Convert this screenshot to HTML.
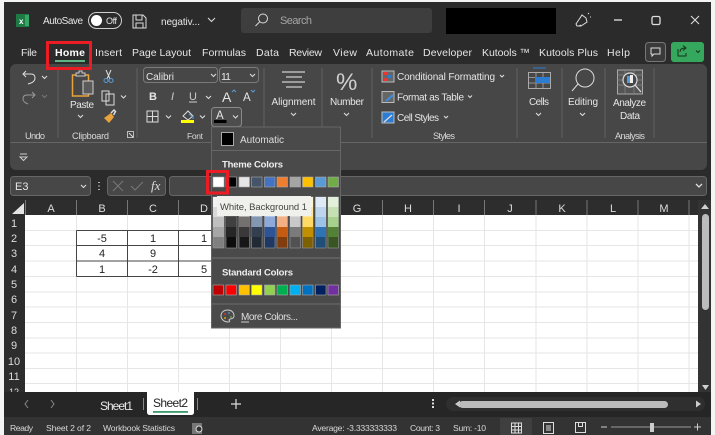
<!DOCTYPE html>
<html><head><meta charset="utf-8"><style>
html,body{margin:0;padding:0;background:#f4f4f4;width:715px;height:435px;overflow:hidden}
svg{display:block;filter:blur(.35px)}
text{font-family:"Liberation Sans",sans-serif;font-size:10.5px;fill:#e6e6e6;white-space:pre}
.s{font-size:9.2px;fill:#d8d8d8}
.t{font-size:10px}
.st{font-size:8.6px;fill:#d8d8d8}
.h{font-size:11px;fill:#dcdcdc;text-anchor:middle}
.c{font-size:11px;fill:#222;text-anchor:middle}
.b{font-weight:bold;font-size:9.5px;fill:#eee}
.l{fill:none;stroke:#dcdcdc;stroke-width:1}
.ch{fill:none;stroke:#dcdcdc;stroke-width:1.1}
.sep{stroke:#666;stroke-width:1}
</style></head><body>
<svg width="715" height="435" viewBox="0 0 715 435" xmlns="http://www.w3.org/2000/svg">
<rect x="4" y="2" width="707" height="433" fill="#2b2b2b"/>
<!-- title bar -->
<rect x="16" y="14" width="13" height="13" fill="#1d7a45"/><rect x="25" y="15" width="4" height="11" fill="#37a768"/>
<text x="19" y="24" style="font-size:8px;font-weight:bold;fill:#fff">x</text>
<text x="43" y="24" class="t" textLength="40">AutoSave</text>
<rect x="88.500" y="12.500" width="33" height="16" rx="8" fill="#2b2b2b" stroke="#cfcfcf"/>
<circle cx="96.500" cy="20.500" r="5.500" fill="#fff"/>
<text x="106" y="24" style="font-size:9px" textLength="11">Off</text>
<path class="l" d="M133 15h10l3 3v10h-13zM136 15v5h6v-5M136 28v-5h7v5" stroke-width="1.100"/>
<text x="161" y="25" class="t" textLength="39">negativ...</text>
<path class="ch" d="M208 18l3.500 3.500 3.500-3.500"/>
<rect x="241" y="8" width="191" height="25" rx="3" fill="#3e3e3e"/>
<circle cx="263" cy="18.500" r="4.500" class="l" stroke="#bbb"/><path class="l" d="M259.500 22l-4 4"/>
<text x="280" y="24" style="fill:#a5a5a5;font-size:11px" textLength="32">Search</text>
<rect x="446" y="8" width="110" height="26" fill="#000"/>
<path class="l" d="M576 24l6-9 4 3 1 4-6 4-4 0zM581 25l-2 1M588 14l1-1M590 17h1"/>
<path d="M614 20h8" stroke="#ccc" stroke-width="1.500"/>
<rect x="652" y="16.500" width="8" height="8" rx="1.500" fill="none" stroke="#ddd" stroke-width="1.300"/>
<path d="M691 16l8 8M699 16l-8 8" stroke="#ddd" stroke-width="1.100"/>
<!-- tabs -->
<text x="21" y="56" textLength="16">File</text>
<text x="55" y="56" textLength="30" style="font-weight:bold;font-size:10.5px;fill:#fff">Home</text>
<text x="95" y="56" textLength="27">Insert</text>
<text x="132" y="56" textLength="59">Page Layout</text>
<text x="202" y="56" textLength="44">Formulas</text>
<text x="256" y="56" textLength="23">Data</text>
<text x="289" y="56" textLength="33">Review</text>
<text x="333" y="56" textLength="24">View</text>
<text x="366" y="56" textLength="48">Automate</text>
<text x="423" y="56" textLength="49">Developer</text>
<text x="482" y="56" textLength="48">Kutools ™</text>
<text x="539" y="56" textLength="59">Kutools Plus</text>
<text x="607" y="56" textLength="23">Help</text>
<rect x="55" y="60" width="30" height="2" fill="#5cb684"/>
<rect x="645.500" y="42.500" width="20" height="19" rx="3" fill="#3a3a3a" stroke="#777"/>
<path class="l" d="M651 48h9v6h-6l-2 2v-2h-1z"/>
<rect x="671" y="42" width="33" height="20" rx="3" fill="#36a85d"/>
<path d="M678 49v7h8v-3M680 52c0-3 2-4 5-4M683 45.500l3 2.500-3 2.500" fill="none" stroke="#17301f"/>
<path d="M696 50.500l2 2 2-2" fill="none" stroke="#17301f"/>
<!-- ribbon -->
<rect x="10" y="64" width="697" height="106" rx="6" fill="#474747"/>
<path class="sep" d="M10.500 142.500H707"/>
<path d="M58 68v70M137 68v70M264 68v70M322 68v70M372 68v70M517 68v70M562 68v70M605 68v70M654 68v70" stroke="#606060"/>
<path class="l" d="M26 71l-3 3 3 3M23 74h8c3 0 4 2 4 4 0 3-3 5-7 6"/><path class="ch" d="M42 76l2.500 2.500 2.500-2.500"/>
<path d="M32 92l3 3-3 3M35 95h-8c-3 0-4 2-4 4 0 2 2 4 5 5" fill="none" stroke="#9a9a9a"/><path d="M42 95l2.500 2.500 2.500-2.500" fill="none" stroke="#777"/>
<text x="25" y="139" class="s" textLength="20">Undo</text>
<!-- clipboard -->
<rect x="72.500" y="75" width="16" height="21" fill="none" stroke="#e8a33c" stroke-width="1.500"/>
<path d="M76 75v-2h3v-2h3v2h3v3h-9z" fill="#474747" stroke="#ccc"/>
<rect x="83" y="81" width="10" height="13" fill="#5a5a5a" stroke="#cfcfcf"/>
<text x="70" y="108" class="t" textLength="24">Paste</text>
<path class="ch" d="M78 115l2.500 2.500 2.500-2.500"/>
<path class="l" d="M106 70l4 9M111 70l-4 9"/><circle cx="106" cy="80.500" r="2" fill="none" stroke="#5b9bd5"/><circle cx="111" cy="80.500" r="2" fill="none" stroke="#5b9bd5"/>
<path class="l" d="M102 91h7v10h-7zM106 94h8v11h-8z" fill="#474747"/><path class="ch" d="M121 95.500l2.500 2.500 2.500-2.500"/>
<path d="M104 118l7-5 3 4-5 6z" fill="#e8a33c"/><path d="M111 113l3-3 1.500 1.500-2 3.500" fill="none" stroke="#ddd" stroke-width="1.500"/>
<text x="72" y="139" class="s" textLength="37">Clipboard</text>
<rect x="127.500" y="131.500" width="6" height="6" fill="none" stroke="#bbb"/><path d="M129 133l4 4" stroke="#ddd"/>
<!-- font -->
<rect x="143.500" y="67.500" width="74" height="15" rx="3" fill="#474747" stroke="#7a7a7a"/>
<text x="146" y="80" class="t" textLength="28">Calibri</text><path class="ch" d="M211 74l2.500 2.500 2.500-2.500"/>
<rect x="219.500" y="67.500" width="39" height="15" rx="3" fill="#474747" stroke="#7a7a7a"/>
<text x="221" y="80" textLength="10">11</text><path class="ch" d="M250 74l2.500 2.500 2.500-2.500"/>
<text x="149" y="100" style="font-weight:bold;font-size:11px">B</text>
<text x="171" y="100" style="font-style:italic;font-size:11px;fill:#ccc">I</text>
<text x="189" y="100" style="font-size:11px;fill:#ccc">U</text><path d="M189 102h8" stroke="#ccc"/>
<path class="ch" d="M206 96l2.500 2.500 2.500-2.500"/>
<text x="222" y="102" style="font-size:14px">A</text><path d="M232 92l2 -2 2 2" fill="none" stroke="#5b9bd5"/>
<text x="243" y="101" style="font-size:11.500px">A</text><path d="M251 90l2 2 2-2" fill="none" stroke="#5b9bd5"/>
<path class="l" d="M147 111h11v11h-11zM152.500 111v11M147 116.500h11" stroke-width="1.200"/><path class="ch" d="M166 115.500l2.500 2.500 2.500-2.500"/>
<path d="M183 116l5-5 5 5-5 4z" fill="none" stroke="#ddd"/><path d="M189 114l4 3v2" fill="none" stroke="#5b9bd5"/>
<rect x="181" y="120" width="13" height="3" fill="#ffff00"/><path class="ch" d="M200 115.500l2.500 2.500 2.500-2.500"/>
<rect x="211.500" y="107.500" width="30" height="19" rx="3" fill="#4d4d4d" stroke="#8a8a8a"/>
<text x="216" y="119" style="font-size:11.500px">A</text><rect x="214" y="120" width="12.500" height="3" fill="#000"/>
<path class="ch" d="M233 115.500l2.500 2.500 2.500-2.500"/>
<text x="187" y="139" class="s" textLength="16" style="font-size:8.500px">Font</text>
<!-- alignment -->
<path d="M282 72h23M286 77h16M282 82h23M286 87h16" stroke="#cfcfcf" stroke-width="1.300"/>
<text x="271.500" y="105" class="t" textLength="44">Alignment</text>
<path class="ch" d="M291 113l2.500 2.500 2.500-2.500"/>
<!-- number -->
<text x="336" y="90" style="font-size:24px;fill:#cfcfcf">%</text>
<text x="330" y="105" class="t" textLength="34">Number</text>
<path class="ch" d="M344 113l2.500 2.500 2.500-2.500"/>
<!-- styles -->
<rect x="382" y="71" width="12" height="11" fill="#666" stroke="#bbb"/><rect x="384" y="72" width="4" height="3" fill="#e33"/><rect x="388" y="75" width="3" height="3" fill="#2b7cd3"/><rect x="384" y="78" width="4" height="3" fill="#e33"/>
<text x="397" y="80" class="t" textLength="98">Conditional Formatting</text><path class="ch" d="M500 75l2 2 2-2"/>
<rect x="382" y="91.500" width="12" height="11" fill="#666" stroke="#bbb"/><path d="M386 101l7-6" stroke="#3c8fe0" stroke-width="2"/>
<text x="397" y="100.500" class="t" textLength="67">Format as Table</text><path class="ch" d="M468 95.500l2 2 2-2"/>
<rect x="382" y="112" width="12" height="11" fill="#2b7cd3" stroke="#bbb"/><path d="M384 122l8-7" stroke="#ddd" stroke-width="1.300"/>
<text x="397" y="121" class="t" textLength="42">Cell Styles</text><path class="ch" d="M444 116l2 2 2-2"/>
<text x="433" y="139" class="s" textLength="22">Styles</text>
<!-- cells -->
<rect x="528.500" y="72.500" width="22" height="16" fill="none" stroke="#aaa"/><path d="M528 77.500h23M528 83h23M536 72v16M543 72v16" stroke="#aaa" stroke-width=".8"/>
<rect x="535" y="77" width="15" height="6" fill="#2b7cd3"/><path d="M533 68h13" stroke="#2b7cd3"/>
<text x="529" y="105" class="t" textLength="20">Cells</text><path class="ch" d="M536 113l2.500 2.500 2.500-2.500"/>
<!-- editing -->
<circle cx="585" cy="78" r="9" class="l" stroke="#ccc"/><path class="l" d="M578 84l-6 7"/>
<text x="568" y="105" class="t" textLength="30">Editing</text><path class="ch" d="M580 113l2.500 2.500 2.500-2.500"/>
<!-- analyze -->
<rect x="617.500" y="70" width="25" height="24" fill="#555" stroke="#aaa"/><path d="M617 75h26M617 80h26M617 85h26M625 70v24M634 70v24" stroke="#888" stroke-width=".7"/>
<circle cx="630" cy="80" r="7" fill="#474747" stroke="#ddd" stroke-width="1.200"/><rect x="627" y="76" width="3" height="7" fill="#5b9bd5"/><rect x="630" y="75" width="3" height="8" fill="#eee"/><path d="M635 85l6 7" stroke="#ddd" stroke-width="1.300"/>
<text x="613" y="106" class="t" textLength="33">Analyze</text><text x="620" y="119" class="t" textLength="20">Data</text>
<text x="615" y="139" class="s" textLength="30">Analysis</text>
<path d="M20 154h7M20 157h7l-3.500 3.500z" fill="none" stroke="#ccc"/>
<!-- formula bar -->
<rect x="10.500" y="176.500" width="80" height="19" rx="3" fill="#474747" stroke="#666"/>
<text x="15" y="190" style="font-size:11px">E3</text><path class="ch" d="M81 185l2.500 2.500 2.500-2.500" stroke-width="1.300"/>
<path d="M99 182v1M99 185.500v1M99 189v1" stroke="#ddd" stroke-width="1.500"/>
<rect x="107.500" y="176.500" width="58" height="19" rx="3" fill="#474747" stroke="#666"/>
<path d="M113 181l10 10M123 181l-10 10M131 186l4 4 8-8" fill="none" stroke="#777"/>
<text x="151" y="190" style="font-family:'Liberation Serif',serif;font-style:italic;font-size:13px;fill:#ddd">fx</text>
<rect x="169.500" y="176.500" width="537" height="19" rx="3" fill="#474747" stroke="#666"/>
<path d="M696 184l3 3 3-3" fill="none" stroke="#ddd" stroke-width="1.300"/>
<!-- sheet -->
<rect x="4" y="200" width="707" height="192" fill="#2d2d2d"/>
<rect x="25" y="215" width="673" height="177" fill="#fff"/>
<path d="M24 203v11H12z" fill="#e4e4e4"/>
<path d="M25.500 200v15M76.500 200v15M127.500 200v15M178.500 200v15M229.500 200v15M280.500 200v15M331.500 200v15M382.500 200v15M433.500 200v15M484.500 200v15M536 200v15M587 200v15M638 200v15M689 200v15" stroke="#777"/>
<path d="M25 230.500h673M25 245.500h673M25 261h673M25 276.500h673M25 292h673M25 307h673M25 322.500h673M25 338h673M25 353h673M25 368.500h673M25 383.500h673" stroke="#e6e6e6"/>
<path d="M76.500 215v177M127.500 215v177M178.500 215v177M229.500 215v177M280.500 215v177M331.500 215v177M382.500 215v177M433.500 215v177M484.500 215v177M536 215v177M587 215v177M638 215v177M689 215v177" stroke="#e6e6e6"/>
<path d="M76.500 230.500h153M76.500 245.500h153M76.500 261h153M76.500 276.500h153M76.500 230.500v46M127.500 230.500v46M178.500 230.500v46" stroke="#444" fill="none"/>
<text x="51" y="212" class="h">A</text><text x="102" y="212" class="h">B</text><text x="153" y="212" class="h">C</text><text x="204" y="212" class="h">D</text>
<text x="357" y="212" class="h">G</text><text x="408" y="212" class="h">H</text><text x="459" y="212" class="h">I</text><text x="510" y="212" class="h">J</text><text x="562" y="212" class="h">K</text><text x="613" y="212" class="h">L</text><text x="664" y="212" class="h">M</text>
<text x="14" y="227" class="h">1</text><text x="14" y="242" class="h">2</text><text x="14" y="257" class="h">3</text><text x="14" y="273" class="h">4</text><text x="14" y="288" class="h">5</text><text x="14" y="303" class="h">6</text><text x="14" y="319" class="h">7</text><text x="14" y="334" class="h">8</text><text x="14" y="349" class="h">9</text><text x="14" y="365" class="h">10</text><text x="14" y="380" class="h">11</text><text x="14" y="395" class="h" style="font-size:9px">12</text>
<text x="102" y="242" class="c">-5</text><text x="153" y="242" class="c">1</text><text x="204" y="242" class="c">1</text>
<text x="102" y="257" class="c">4</text><text x="153" y="257" class="c">9</text>
<text x="102" y="273" class="c">1</text><text x="153" y="273" class="c">-2</text><text x="204" y="273" class="c">5</text>
<!-- v scroll -->
<rect x="698" y="200" width="13" height="192" fill="#333"/>
<path d="M701 209l4-5 4 5z" fill="#d0d0d0"/><rect x="702" y="214" width="7" height="96" rx="3.500" fill="#bcbcbc"/><path d="M702 385h7l-3.500 5z" fill="#d0d0d0"/>
<!-- tabs bar -->
<rect x="4" y="392" width="707" height="25" fill="#262626"/>
<path d="M28 400l-3 4 3 4M51 400l3 4-3 4" fill="none" stroke="#888"/>
<text x="100" y="410" style="font-size:12px;fill:#e8e8e8" textLength="33">Sheet1</text>
<path d="M143.500 398v12M197.500 398v12" stroke="#888"/>
<path d="M147 392h47v20q0 3-3 3h-41q-3 0-3-3z" fill="#fff"/>
<text x="153" y="407" style="font-size:12px;fill:#222" textLength="35">Sheet2</text>
<rect x="153" y="411" width="35" height="1.800" fill="#3d9a6a"/>
<path d="M236 399v10M231 404h10" stroke="#ddd" stroke-width="1.200"/>
<path d="M433 403.500v0M433 407v0M433 400v0" stroke="#ddd" stroke-width="2" stroke-linecap="square"/>
<rect x="446" y="397" width="259" height="14" rx="7" fill="#2f2f2f"/>
<path d="M455 404l5-3.500v7z" fill="#ccc"/><path d="M696 400.500l5 3.500-5 3.500z" fill="#ccc"/>
<rect x="459" y="401" width="209" height="7" rx="3.500" fill="#bcbcbc"/>
<!-- status -->
<rect x="4" y="417" width="707" height="18" fill="#333"/>
<text x="10" y="431" class="st" textLength="23">Ready</text>
<text x="46" y="431" class="st" textLength="45">Sheet 2 of 2</text>
<text x="103" y="431" class="st" textLength="72">Workbook Statistics</text>
<path d="M192 423h10v11h-10z" fill="#777"/><circle cx="199" cy="429" r="3" fill="#333" stroke="#ddd"/>
<text x="312" y="431" class="st" textLength="85">Average: -3.333333333</text>
<text x="410" y="431" class="st" textLength="30">Count: 3</text>
<text x="453" y="431" class="st" textLength="33">Sum: -10</text>
<rect x="500" y="418" width="32" height="17" fill="#3f3f3f"/>
<path d="M511.500 423h10v10h-10zM515 423v10M518.500 423v10M511.500 426.500h10M511.500 430h10" fill="none" stroke="#ddd"/>
<rect x="543.500" y="422.500" width="10" height="11" fill="none" stroke="#ddd"/><rect x="546" y="425" width="5" height="6" fill="#888"/>
<path d="M575.500 422.500h10v10h-10zM578.500 422.500v4h4v-4" fill="none" stroke="#ddd"/>
<path d="M601 427h6" stroke="#ccc"/>
<path d="M611 427h80" stroke="#777" stroke-width="1.500"/><rect x="650" y="423" width="4" height="9" fill="#ccc"/>
<path d="M694 427h7M697.500 423.500v7" stroke="#ccc"/>
<!-- dropdown -->
<rect x="211.500" y="127" width="129" height="201" fill="#4a4a4a" stroke="#666"/>
<rect x="221.500" y="132.500" width="12" height="13" fill="#000" stroke="#aaa"/>
<text x="240" y="143" class="t" textLength="44" style="fill:#ddd">Automatic</text>
<path d="M212 150.500h128" stroke="#666"/>
<text x="222" y="167.500" class="b" textLength="61">Theme Colors</text>
<g stroke="#aaa" stroke-width=".6">
<rect x="213" y="177" width="11" height="10" fill="#fff"/><rect x="226" y="177" width="10.500" height="10" fill="#000"/><rect x="239" y="177" width="10.500" height="10" fill="#e7e6e6"/><rect x="251.500" y="177" width="10.500" height="10" fill="#44546a"/><rect x="264.500" y="177" width="10.500" height="10" fill="#4472c4"/><rect x="277" y="177" width="10.500" height="10" fill="#ed7d31"/><rect x="290" y="177" width="10.500" height="10" fill="#a5a5a5"/><rect x="302.500" y="177" width="10.500" height="10" fill="#ffc000"/><rect x="315.500" y="177" width="10.500" height="10" fill="#5b9bd5"/><rect x="328" y="177" width="10.500" height="10" fill="#70ad47"/>
</g>
<g>
<rect x="213" y="197" width="11" height="51" fill="#808080" stroke="#999" stroke-width=".6"/><rect x="213" y="197" width="11" height="10" fill="#f2f2f2"/><rect x="213" y="207" width="11" height="10" fill="#d9d9d9"/><rect x="213" y="217" width="11" height="10" fill="#bfbfbf"/><rect x="213" y="227" width="11" height="10" fill="#a6a6a6"/>
<rect x="226" y="197" width="10.500" height="51" fill="#0d0d0d" stroke="#999" stroke-width=".6"/><rect x="226" y="197" width="10.500" height="10" fill="#7f7f7f"/><rect x="226" y="207" width="10.500" height="10" fill="#595959"/><rect x="226" y="217" width="10.500" height="10" fill="#404040"/><rect x="226" y="227" width="10.500" height="10" fill="#262626"/>
<rect x="239" y="197" width="10.500" height="51" fill="#171717" stroke="#999" stroke-width=".6"/><rect x="239" y="197" width="10.500" height="10" fill="#d0cece"/><rect x="239" y="207" width="10.500" height="10" fill="#aeabab"/><rect x="239" y="217" width="10.500" height="10" fill="#757070"/><rect x="239" y="227" width="10.500" height="10" fill="#3a3838"/>
<rect x="251.500" y="197" width="10.500" height="51" fill="#222b35" stroke="#999" stroke-width=".6"/><rect x="251.500" y="197" width="10.500" height="10" fill="#d6dce4"/><rect x="251.500" y="207" width="10.500" height="10" fill="#adb9ca"/><rect x="251.500" y="217" width="10.500" height="10" fill="#8497b0"/><rect x="251.500" y="227" width="10.500" height="10" fill="#333f4f"/>
<rect x="264.500" y="197" width="10.500" height="51" fill="#1f3864" stroke="#999" stroke-width=".6"/><rect x="264.500" y="197" width="10.500" height="10" fill="#d9e2f3"/><rect x="264.500" y="207" width="10.500" height="10" fill="#b4c6e7"/><rect x="264.500" y="217" width="10.500" height="10" fill="#8eaadb"/><rect x="264.500" y="227" width="10.500" height="10" fill="#2f5496"/>
<rect x="277" y="197" width="10.500" height="51" fill="#833c0b" stroke="#999" stroke-width=".6"/><rect x="277" y="197" width="10.500" height="10" fill="#fbe5d5"/><rect x="277" y="207" width="10.500" height="10" fill="#f7caac"/><rect x="277" y="217" width="10.500" height="10" fill="#f4b083"/><rect x="277" y="227" width="10.500" height="10" fill="#c55a11"/>
<rect x="290" y="197" width="10.500" height="51" fill="#525252" stroke="#999" stroke-width=".6"/><rect x="290" y="197" width="10.500" height="10" fill="#ededed"/><rect x="290" y="207" width="10.500" height="10" fill="#dbdbdb"/><rect x="290" y="217" width="10.500" height="10" fill="#c9c9c9"/><rect x="290" y="227" width="10.500" height="10" fill="#7b7b7b"/>
<rect x="302.500" y="197" width="10.500" height="51" fill="#7f6000" stroke="#999" stroke-width=".6"/><rect x="302.500" y="197" width="10.500" height="10" fill="#fff2cc"/><rect x="302.500" y="207" width="10.500" height="10" fill="#ffe599"/><rect x="302.500" y="217" width="10.500" height="10" fill="#ffd966"/><rect x="302.500" y="227" width="10.500" height="10" fill="#bf8f00"/>
<rect x="315.500" y="197" width="10.500" height="51" fill="#1f4e79" stroke="#999" stroke-width=".6"/><rect x="315.500" y="197" width="10.500" height="10" fill="#deeaf6"/><rect x="315.500" y="207" width="10.500" height="10" fill="#bdd6ee"/><rect x="315.500" y="217" width="10.500" height="10" fill="#9cc2e5"/><rect x="315.500" y="227" width="10.500" height="10" fill="#2e74b5"/>
<rect x="328" y="197" width="10.500" height="51" fill="#375623" stroke="#999" stroke-width=".6"/><rect x="328" y="197" width="10.500" height="10" fill="#e2efd9"/><rect x="328" y="207" width="10.500" height="10" fill="#c5e0b3"/><rect x="328" y="217" width="10.500" height="10" fill="#a8d08d"/><rect x="328" y="227" width="10.500" height="10" fill="#538135"/>
</g>
<rect x="217" y="196" width="94" height="20" fill="#f0f0ec"/>
<text x="220" y="210" textLength="87" style="font-size:9.500px;fill:#444">White, Background 1</text>
<path d="M212 258h128" stroke="#666" stroke-width="1.500"/>
<text x="222" y="275.500" class="b" textLength="71">Standard Colors</text>
<g stroke="#aaa" stroke-width=".6">
<rect x="213" y="285" width="10.500" height="10" fill="#c00000"/><rect x="226" y="285" width="10.500" height="10" fill="#ff0000"/><rect x="239" y="285" width="10.500" height="10" fill="#ffc000"/><rect x="251.500" y="285" width="10.500" height="10" fill="#ffff00"/><rect x="264.500" y="285" width="10.500" height="10" fill="#92d050"/><rect x="277" y="285" width="10.500" height="10" fill="#00b050"/><rect x="290" y="285" width="10.500" height="10" fill="#00b0f0"/><rect x="302.500" y="285" width="10.500" height="10" fill="#0070c0"/><rect x="315.500" y="285" width="10.500" height="10" fill="#002060"/><rect x="328" y="285" width="10.500" height="10" fill="#7030a0"/>
</g>
<path d="M212 304h128" stroke="#666" stroke-width="1.200"/>
<path d="M228 310c-4 0-7 2-7 6 0 3 3 6 7 6 2 0 2-1 1-2 0-2 5 0 5-4s-3-6-6-6z" fill="none" stroke="#ccc"/>
<circle cx="225" cy="314" r=".9" fill="#e33"/><circle cx="229" cy="313" r=".9" fill="#5b9bd5"/><circle cx="225" cy="318" r=".9" fill="#ffc000"/><circle cx="231" cy="317" r=".9" fill="#70ad47"/>
<text x="241" y="320" class="t" textLength="57" style="fill:#ddd">More Colors...</text>
<path d="M241 322h8" stroke="#ccc"/>
<!-- red boxes -->
<rect x="47.500" y="42.500" width="43" height="26" fill="none" stroke="#ec1c24" stroke-width="3"/>
<rect x="207.500" y="171.500" width="20" height="21.500" fill="none" stroke="#ec1c24" stroke-width="3"/>
</svg>
</body></html>
